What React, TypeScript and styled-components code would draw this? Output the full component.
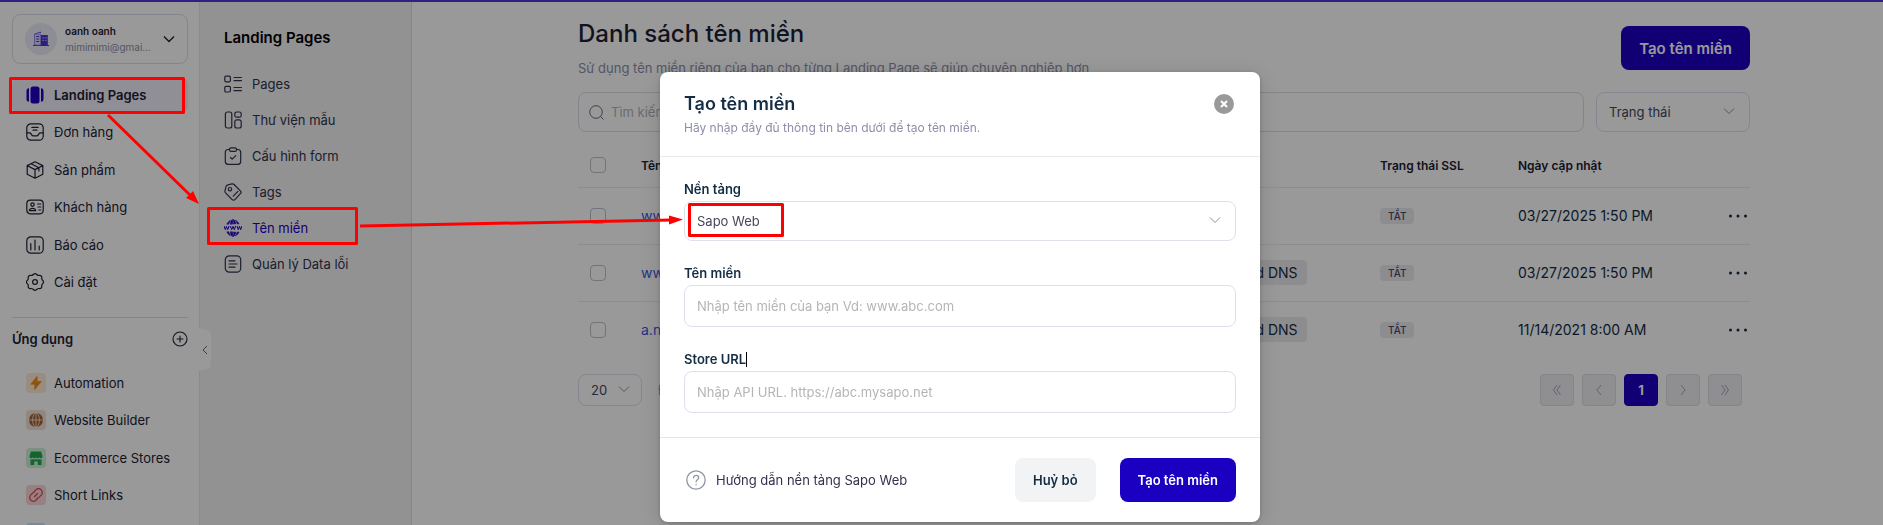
import React from "react";
import styled, { createGlobalStyle } from "styled-components";

const GlobalStyle = createGlobalStyle`
  *, *::before, *::after { box-sizing: border-box; }
  body { margin: 0; background: #fff; overflow: hidden; }
  body, button, input, select { font-family: Inter, "Noto Sans", sans-serif; }
  button { cursor: pointer; }
  a { text-decoration: none; }
  svg { display: block; flex: none; }
`;

/* ---------- shell ---------- */

const Shell = styled.div`
  height: 100vh;
  overflow: hidden;
  display: flex;
  border-top: 2px solid #5533d8;
  color: #212134;
  font-size: 13px;
`;

const Sidebar = styled.aside`
  flex: none;
  width: 200px;
  padding: 12px 11px 0 12px;
  border-right: 1px solid #e6e6ee;
`;

const SubSidebar = styled.aside`
  position: relative;
  flex: none;
  width: 212px;
  padding: 24px 12px 0 24px;
  background: #f3f3f6;
  border-right: 1px solid #dcdce4;
`;

const Main = styled.main`
  flex: 1;
  min-width: 0;
  padding: 14px 133px 0 166px;
`;

/* ---------- sidebar ---------- */

const AccountButton = styled.button`
  display: flex;
  align-items: center;
  gap: 8px;
  width: 100%;
  height: 50px;
  padding: 0 12px;
  border: 1px solid #dcdce8;
  border-radius: 8px;
  background: #fff;
  color: #212134;
  text-align: left;
`;

const Avatar = styled.span`
  display: grid;
  place-items: center;
  width: 32px;
  height: 32px;
  border-radius: 50%;
  background: #ececfa;
`;

const AccountText = styled.span`
  flex: 1;
  min-width: 0;
  display: flex;
  flex-direction: column;
  font-size: 10px;
  line-height: 16px;
`;

const AccountName = styled.span`
  font-weight: 600;
`;

const AccountMail = styled.span`
  color: #8e8ea9;
  white-space: nowrap;
`;

const NavList = styled.nav`
  display: grid;
  grid-auto-rows: 1fr;
  height: 225px;
  margin-top: 12px;
`;

const NavLink = styled.a<{ $active?: boolean }>`
  display: flex;
  align-items: center;
  gap: 10px;
  margin: 2px 0;
  padding-left: 14px;
  border-radius: 6px;
  color: #212134;
  font-weight: ${(p) => (p.$active ? 600 : 400)};
  background: ${(p) => (p.$active ? "#eeeef8" : "transparent")};
`;

const AppTile = styled.span<{ $bg: string }>`
  display: grid;
  place-items: center;
  flex: none;
  width: 20px;
  height: 20px;
  border-radius: 4px;
  background: ${(p) => p.$bg};
`;

const AppLink = styled(NavLink)`
  gap: 8px;
`;

const AppsHead = styled.div`
  display: flex;
  align-items: center;
  justify-content: space-between;
  height: 43px;
  margin-top: 16px;
  border-top: 1px solid #dcdce4;
  font-weight: 600;
`;

const IconButton = styled.button`
  display: grid;
  place-items: center;
  padding: 0;
  border: 0;
  background: none;
  color: inherit;
`;

const AppsList = styled(NavList)`
  margin-top: 4px;
`;

/* ---------- second sidebar ---------- */

const SubTitle = styled.h2`
  margin: 0 0 16px;
  font-size: 15px;
  line-height: 24px;
  font-weight: 600;
  color: #000;
`;

const SubLink = styled.a<{ $active?: boolean }>`
  display: flex;
  align-items: center;
  gap: 10px;
  height: 36px;
  color: ${(p) => (p.$active ? "#1f00c2" : "#32324d")};
`;

const Collapse = styled.button`
  position: absolute;
  left: -1px;
  top: 326px;
  width: 12px;
  height: 43px;
  padding: 0;
  border: 0;
  background: none;
`;

/* ---------- main ---------- */

const PageHead = styled.header`
  display: flex;
  justify-content: space-between;
  align-items: flex-start;
  height: 76px;
`;

const PageTitle = styled.h1`
  margin: 0 0 6px;
  font-size: 24px;
  line-height: 36px;
  font-weight: 500;
`;

const PageText = styled.p`
  margin: 0;
  line-height: 20px;
  color: #8e8ea9;
`;

const Button = styled.button<{ $kind: "primary" | "plain"; $large?: boolean }>`
  height: 44px;
  padding: 0 18px;
  border: 0;
  border-radius: 8px;
  font-size: ${(p) => (p.$large ? 15 : 13)}px;
  font-weight: 600;
  white-space: nowrap;
  color: ${(p) => (p.$kind === "primary" ? "#fff" : "#142c44")};
  background: ${(p) => (p.$kind === "primary" ? "#1b00c2" : "#f1f3f5")};
`;

const PageAction = styled.div`
  padding-top: 10px;
`;

const Filters = styled.div`
  display: flex;
  gap: 12px;
`;

const SearchBox = styled.label`
  flex: 1;
  display: flex;
  align-items: center;
  gap: 7px;
  height: 40px;
  padding: 0 10px;
  border: 1px solid #dcdce8;
  border-radius: 8px;
`;

const SearchInput = styled.input`
  flex: 1;
  padding: 0;
  border: 0;
  outline: 0;
  background: none;
  font-size: 13px;
  &::placeholder { color: #b3b3b8; }
`;

const SelectWrap = styled.div<{ $width?: number; $height: number; $right: number }>`
  display: grid;
  align-items: center;
  width: ${(p) => (p.$width ? `${p.$width}px` : "100%")};
  height: ${(p) => p.$height}px;
  & > * { grid-area: 1 / 1; }
  & > svg {
    justify-self: end;
    margin: 0 ${(p) => p.$right}px 2px 0;
    pointer-events: none;
  }
`;

const Select = styled.select`
  appearance: none;
  width: 100%;
  height: 100%;
  padding: 0 12px;
  border: 1px solid #dfdfee;
  border-radius: 8px;
  background: none;
  font-size: 13px;
  color: #46465a;
`;

const Table = styled.table`
  width: 100%;
  margin-top: 12px;
  border-collapse: collapse;
  table-layout: fixed;
`;

const HeadCell = styled.th<{ $width?: number }>`
  width: ${(p) => (p.$width ? `${p.$width}px` : "auto")};
  height: 43px;
  padding: 0;
  border-bottom: 1px solid #ececf2;
  text-align: left;
  font-size: 12px;
  font-weight: 600;
`;

const Cell = styled.td`
  height: 57px;
  padding: 0;
  font-size: 14px;
  color: #142c44;
  border-bottom: 1px solid #ececf2;
  tr:last-child > & { border-bottom: 0; }
`;

const Checkbox = styled.input`
  appearance: none;
  display: block;
  width: 16px;
  height: 16px;
  margin: 0 0 0 12px;
  border: 1px solid #c0c0cf;
  border-radius: 4px;
`;

const DomainLink = styled.a`
  color: #3d55e0;
`;

const DnsTag = styled.span`
  display: inline-block;
  padding: 0 9px;
  border-radius: 4px;
  line-height: 25px;
  background: #ececef;
`;

const StateTag = styled.span`
  display: block;
  width: fit-content;
  padding: 0 8px;
  border-radius: 4px;
  font-size: 10px;
  line-height: 16px;
  font-weight: 500;
  color: #4a4a6a;
  background: #ececf1;
`;

const MoreButton = styled(IconButton)`
  margin-left: auto;
`;

const TableFoot = styled.footer`
  display: flex;
  align-items: center;
  gap: 16px;
  margin-top: 16px;
  padding-right: 8px;
`;

const Pager = styled.div`
  display: flex;
  gap: 8px;
  margin-left: auto;
`;

const PageButton = styled.button<{ $current?: boolean }>`
  display: grid;
  place-items: center;
  width: 34px;
  height: 32px;
  padding: 0;
  border: 1px solid ${(p) => (p.$current ? "#1b00c2" : "#dcdce4")};
  border-radius: 4px;
  font-size: 13px;
  font-weight: 700;
  color: ${(p) => (p.$current ? "#fff" : "#a5a5ba")};
  background: ${(p) => (p.$current ? "#1b00c2" : "#eeeef3")};
`;

/* ---------- dialog ---------- */

const Overlay = styled.div`
  position: fixed;
  inset: 0;
  display: flex;
  justify-content: center;
  align-items: flex-start;
  padding: 72px 0 0 37px;
  background: rgba(0, 0, 0, 0.4);
`;

const Dialog = styled.form`
  width: 600px;
  border-radius: 8px;
  background: #fff;
  color: #142c44;
  font-size: 13px;
  box-shadow: 0 4px 24px rgba(0, 0, 0, 0.15), 0 1px 4px rgba(0, 0, 0, 0.2);
`;

const DialogHead = styled.header`
  display: flex;
  justify-content: space-between;
  align-items: flex-start;
  height: 85px;
  padding: 20px 26px 0 24px;
  border-bottom: 1px solid #e9e9ec;
`;

const DialogTitle = styled.h2`
  margin: 0;
  font-size: 18px;
  line-height: 24px;
  font-weight: 600;
`;

const DialogText = styled.p`
  margin: 2px 0 0;
  font-size: 12px;
  line-height: 20px;
  color: #8e8ea9;
`;

const CloseButton = styled.button`
  display: grid;
  place-items: center;
  width: 20px;
  height: 20px;
  margin-top: 2px;
  padding: 0;
  border: 0;
  border-radius: 50%;
  color: #fff;
  background: #999;
`;

const DialogBody = styled.div`
  display: flex;
  flex-direction: column;
  gap: 22px;
  padding: 22px 24px 24px;
`;

const Field = styled.div`
  display: flex;
  flex-direction: column;
`;

const Label = styled.label`
  display: flex;
  align-items: center;
  height: 22px;
  padding-bottom: 2px;
  font-weight: 600;
`;

const Caret = styled.span`
  width: 1px;
  height: 15px;
  background: #000;
`;

const TextInput = styled.input`
  height: 42px;
  padding: 0 12px;
  border: 1px solid #dfdfee;
  border-radius: 8px;
  outline: 0;
  font-size: 13px;
  &::placeholder { color: #b5b5b8; }
`;

const DialogFoot = styled.footer`
  display: flex;
  align-items: center;
  gap: 24px;
  height: 85px;
  padding: 0 24px 0 26px;
  border-top: 1px solid #e4e4ea;
`;

const HelpLink = styled.a`
  display: flex;
  align-items: center;
  gap: 10px;
  margin-right: auto;
  color: #32324d;
`;

/* ---------- annotation marks ---------- */

const Marks = styled.svg`
  position: fixed;
  left: 0;
  top: 0;
  pointer-events: none;
`;

/* ---------- icons ---------- */

const Icon = ({ size = 18, box = 18, w = 1.2, children }: { size?: number; box?: number; w?: number; children: React.ReactNode }) => (
  <svg width={size} height={size} viewBox={`0 0 ${box} ${box}`} fill="none" stroke="currentColor" strokeWidth={w} strokeLinecap="round" strokeLinejoin="round" aria-hidden="true">
    {children}
  </svg>
);

const Chevron = ({ color = "#8e8e98", w = 1 }: { color?: string; w?: number }) => (
  <svg width="12" height="12" viewBox="0 0 12 12" fill="none" stroke={color} strokeWidth={w} aria-hidden="true">
    <path d="M1 3.5 6 8.5l5-5" />
  </svg>
);

const PanelsIcon = () => (
  <Icon>
    <rect x="4.5" y=".5" width="9" height="17" rx="2.5" fill="#1f00c2" stroke="none" />
    <path d="M3 2.2v13.6C1.2 15.6.5 14.6.5 13V5C.5 3.4 1.2 2.4 3 2.2zM15 2.2v13.6c1.8-.2 2.5-1.2 2.5-2.8V5c0-1.600-.7-2.600-2.500-2.800z" fill="#1f00c2" stroke="none" />
  </Icon>
);
const InboxIcon = () => (
  <Icon>
    <rect x=".8" y=".8" width="16.4" height="16.4" rx="4" />
    <path d="M.8 9.800h2.700c.8 0 1.200.4 1.600 1.100l.6 1c.4.7.8 1 1.600 1h3.400c.8 0 1.200-.3 1.600-1l.6-1c.4-.7.8-1.100 1.600-1.100h2.700M5.800 4.300h6.400M7 7.200h4" />
  </Icon>
);
const BoxIcon = () => (
  <Icon>
    <path d="M9 .8 16.800 4.600v8.600L9 17.200l-7.800-4V4.600zM1.400 4.800 9 8.600l7.600-3.800M9 8.600v8.400M5.200 2.800l7.700 3.900v3.200" />
  </Icon>
);
const IdIcon = () => (
  <Icon>
    <rect x=".8" y="2.200" width="16.400" height="13.600" rx="3.500" />
    <circle cx="6.500" cy="6.600" r="1.700" />
    <path d="M3.300 12.600c-.2-3 6.600-3 6.400 0zM11.500 6h3.300M12 9h2.800M12.800 12h2" />
  </Icon>
);
const ReportIcon = () => (
  <Icon>
    <rect x=".8" y=".8" width="16.400" height="16.400" rx="4" />
    <path d="M4.800 7.500V14M9 4v10M13.200 10v4" />
  </Icon>
);
const GearIcon = () => (
  <Icon>
    <circle cx="9" cy="9" r="2.400" />
    <path d="M7.300 1.500c1-.9 2.400-.9 3.400 0 .9 1 1.700 1.200 3 .9 1.300-.1 2.400 1.100 2.100 2.400-.3 1.200 0 1.900.9 2.500 1 1 1 2.400 0 3.400-.9.600-1.200 1.300-.9 2.500.3 1.300-.8 2.500-2.100 2.400-1.300-.3-2.100-.1-3 .9-1 .9-2.400.9-3.400 0-.9-1-1.700-1.200-3-.9-1.300.1-2.400-1.100-2.100-2.400.3-1.200 0-1.900-.9-2.500-1-1-1-2.400 0-3.400.9-.6 1.200-1.300.9-2.500-.3-1.300.8-2.500 2.100-2.400 1.300.3 2.100.1 3-.9z" />
  </Icon>
);
const PagesIcon = () => (
  <Icon>
    <rect x=".8" y="1.200" width="5.600" height="5.600" rx="1.200" />
    <rect x=".8" y="11.400" width="5.600" height="5.600" rx="1.200" />
    <path d="M10 2.500h7.400M10 5.700h7.400M10 12.500h7.400M10 15.700h7.400" />
  </Icon>
);
const LibraryIcon = () => (
  <Icon>
    <rect x="1.400" y="1" width="6.400" height="16" rx="2" />
    <rect x="10.800" y="1" width="6.400" height="5.200" rx="1.800" />
    <rect x="10.800" y="8.800" width="6.400" height="8.200" rx="2" />
  </Icon>
);
const FormIcon = () => (
  <Icon>
    <path d="M5.500 2.500H4A2.800 2.800 0 0 0 1.300 5.300v9.200A2.800 2.800 0 0 0 4 17.300h10a2.800 2.800 0 0 0 2.700-2.800V5.300A2.800 2.800 0 0 0 14 2.500h-1.500" />
    <rect x="5.500" y=".8" width="7" height="3.600" rx="1.500" />
    <path d="m6.500 10.500 1.700 1.700 3.600-3.600" />
  </Icon>
);
const TagIcon = () => (
  <Icon>
    <path d="M1 7.600 2 3.600C2.300 2.600 2.900 2 3.900 1.800l4-.9c.9-.2 1.600 0 2.200.6l6.300 6.300c.9.900.9 2 0 2.900l-5.300 5.700c-1 1-2.200 1-3.200 0L1.600 9.900C1 9.300.8 8.500 1 7.600z" />
    <circle cx="6" cy="6.200" r="1.700" />
    <path d="m9.200 13.200 4.800-4.800" />
  </Icon>
);
const DocIcon = () => (
  <Icon>
    <rect x="1.300" y=".8" width="15.400" height="16.400" rx="4" />
    <path d="M5 5.800h6M5 9h8M5 12.200h6" />
  </Icon>
);
const DomainIcon = () => (
  <Icon w={1}>
    <path d="M3 4.800A8.400 8.400 0 0 1 6.300 1.400 9 9 0 0 0 4.800 4.800zM6.300 4.800C6.800 2.600 7.500 1 8.400.6v4.200zM9.600.6c.9.400 1.600 2 2.100 4.200H9.600zM11.700 1.400A8.400 8.400 0 0 1 15 4.800h-1.800a9 9 0 0 0-1.500-3.400zM3 13.200a8.400 8.400 0 0 0 3.300 3.400 9 9 0 0 1-1.500-3.400zM6.300 13.200c.5 2.200 1.200 3.800 2.100 4.200v-4.200zM9.600 17.400c.9-.4 1.600-2 2.100-4.200H9.600zM11.700 16.600a8.400 8.400 0 0 0 3.300-3.400h-1.800a9 9 0 0 1-1.500 3.400z" fill="currentColor" strokeWidth=".7" />
    <path d="m.2 7.400 1.100 3.200 1.200-3.200 1.200 3.200L4.900 7.400M6.500 7.400l1.200 3.200L9 7.400l1.300 3.200 1.200-3.200M13.100 7.400l1.200 3.200 1.200-3.200 1.200 3.200 1.100-3.200" />
  </Icon>
);

const BuildingIcon = () => (
  <svg width="16" height="16" viewBox="0 0 16 16" fill="none" aria-hidden="true">
    <path d="M0 14.500h16" stroke="#4a35d0" strokeWidth="1" />
    <path d="M1.500 14V3.200L7.500 1v1" stroke="#4a35d0" strokeWidth=".8" />
    <path d="M1.500 3.200h6V14h-6z" fill="#dcd8f7" stroke="#8c7fe0" strokeWidth=".8" />
    <path d="M8 4h6.800v10.300H8z" fill="#4a35d0" />
    <path d="M3.200 5.500h3M3.200 8h3M3.200 10.500h3" stroke="#4a35d0" strokeWidth="1.200" />
    <path d="M9.500 6.800h1.400M12.200 6.800h1.400M9.500 9.500h1.400M12.200 9.500h1.400" stroke="#b9b0f0" strokeWidth="1.200" />
  </svg>
);
const PlusIcon = () => (
  <Icon size={16} box={16} w={1.1}>
    <circle cx="8" cy="8" r="7" />
    <path d="M8 5v6M5 8h6" />
  </Icon>
);
const SearchIcon = () => (
  <svg width="15" height="15" viewBox="0 0 15 15" fill="none" stroke="#666687" aria-hidden="true">
    <circle cx="7" cy="7" r="6.300" />
    <path d="m11.500 11.500 3 3" />
  </svg>
);
const BoltIcon = () => (
  <svg width="12" height="14" viewBox="0 0 12 14" aria-hidden="true">
    <path d="M7 .5.800 8.200H5L4.600 13.500 11.200 5.600H7.100z" fill="#f08c16" stroke="#f08c16" strokeWidth=".8" strokeLinejoin="round" />
  </svg>
);
const GlobeIcon = () => (
  <svg width="14" height="14" viewBox="0 0 14 14" fill="none" aria-hidden="true">
    <circle cx="7" cy="7" r="7" fill="#a5602e" />
    <path d="M0 7h14M7 0v14" stroke="#f1e2d8" strokeWidth=".9" />
    <ellipse cx="7" cy="7" rx="3.400" ry="7" stroke="#f1e2d8" strokeWidth=".9" />
  </svg>
);
const StoreIcon = () => (
  <svg width="14" height="14" viewBox="0 0 14 14" aria-hidden="true">
    <path d="M2 .5h10L13.500 5c0 2.500-2.600 2.900-3.300 1.300-.6 1.500-2.600 1.500-3.200 0-.6 1.500-2.600 1.500-3.200 0C3.100 7.900.5 7.500.5 5z" fill="#1faa4b" />
    <path d="M1.500 8.300c1 .3 1.700.1 2.300-.4 1 .8 2.200.8 3.200 0 1 .8 2.200.8 3.200 0 .6.500 1.300.7 2.300.4V14H8.800v-3.500H5.200V14H1.500z" fill="#1faa4b" />
  </svg>
);
const LinkIcon = () => (
  <svg width="14" height="14" viewBox="0 0 14 14" fill="none" stroke="#e04050" strokeWidth="1.200" strokeLinecap="round" aria-hidden="true">
    <path d="M5.400 3.300 6.900 1.800a3.700 3.700 0 0 1 5.300 5.300L9.900 9.400a3.200 3.200 0 0 1-2 .8M8.600 10.700 7.100 12.200a3.700 3.700 0 0 1-5.300-5.300l2.300-2.300a3.200 3.200 0 0 1 1.400-.8M5.500 8.500l3-3" />
  </svg>
);
const DotsIcon = () => (
  <svg width="22" height="16" viewBox="0 0 22 16" fill="#142c44" aria-hidden="true">
    <circle cx="2.500" cy="8" r="1.500" />
    <circle cx="10" cy="8" r="1.500" />
    <circle cx="17.500" cy="8" r="1.500" />
  </svg>
);
const CollapseShape = () => (
  <svg width="12" height="43" viewBox="0 0 12 43" fill="none" aria-hidden="true">
    <path d="M0 0l8 2q4 1 4 5v29q0 4-4 5l-8 2z" fill="#fff" />
    <path d="M8 18l-4 4 4 4" stroke="#666687" />
  </svg>
);
const Arrows = ({ double, right }: { double?: boolean; right?: boolean }) => (
  <svg width="12" height="12" viewBox="0 0 12 12" fill="none" stroke="currentColor" aria-hidden="true">
    <g transform={right ? "rotate(180 6 6)" : undefined}>
      <path d={double ? "M6 1 2.500 6 6 11M9.500 1 6 6l3.500 5" : "M8 1 4 6l4 5"} />
    </g>
  </svg>
);

/* ---------- data ---------- */

const mainNav = [
  { label: "Landing Pages", icon: <PanelsIcon />, active: true },
  { label: "Đơn hàng", icon: <InboxIcon /> },
  { label: "Sản phẩm", icon: <BoxIcon /> },
  { label: "Khách hàng", icon: <IdIcon /> },
  { label: "Báo cáo", icon: <ReportIcon /> },
  { label: "Cài đặt", icon: <GearIcon /> },
];

const apps = [
  { label: "Automation", bg: "#fdebd3", icon: <BoltIcon /> },
  { label: "Website Builder", bg: "#f1e2d8", icon: <GlobeIcon /> },
  { label: "Ecommerce Stores", bg: "#cdf0d8", icon: <StoreIcon /> },
  { label: "Short Links", bg: "#fbd5d9", icon: <LinkIcon /> },
  { label: "", bg: "#cfe3fb", icon: null },
  { label: "", bg: "transparent", icon: null },
];

const subNav = [
  { label: "Pages", icon: <PagesIcon /> },
  { label: "Thư viện mẫu", icon: <LibraryIcon /> },
  { label: "Cấu hình form", icon: <FormIcon /> },
  { label: "Tags", icon: <TagIcon /> },
  { label: "Tên miền", icon: <DomainIcon />, active: true },
  { label: "Quản lý Data lỗi", icon: <DocIcon /> },
];

const rows = [
  { domain: "www.abc.com", dns: false, date: "03/27/2025 1:50 PM" },
  { domain: "www.abc.com", dns: true, date: "03/27/2025 1:50 PM" },
  { domain: "a.net", dns: true, date: "11/14/2021 8:00 AM" },
];

export default function App() {
  return (
    <>
      <GlobalStyle />
      <Shell>
        <Sidebar>
          <AccountButton type="button">
            <Avatar><BuildingIcon /></Avatar>
            <AccountText>
              <AccountName>oanh oanh</AccountName>
              <AccountMail>mimimimi@gmai...</AccountMail>
            </AccountText>
            <Chevron color="#212134" w={1.4} />
          </AccountButton>
          <NavList>
            {mainNav.map((n) => (
              <NavLink key={n.label} href="#" $active={n.active}>{n.icon}{n.label}</NavLink>
            ))}
          </NavList>
          <AppsHead>
            Ứng dụng
            <IconButton type="button" aria-label="Thêm ứng dụng"><PlusIcon /></IconButton>
          </AppsHead>
          <AppsList>
            {apps.map((a, i) => (
              <AppLink key={i} href="#"><AppTile $bg={a.bg}>{a.icon}</AppTile>{a.label}</AppLink>
            ))}
          </AppsList>
        </Sidebar>

        <SubSidebar>
          <SubTitle>Landing Pages</SubTitle>
          <nav>
            {subNav.map((n) => (
              <SubLink key={n.label} href="#" $active={n.active}>{n.icon}{n.label}</SubLink>
            ))}
          </nav>
          <Collapse type="button" aria-label="Thu gọn"><CollapseShape /></Collapse>
        </SubSidebar>

        <Main>
          <PageHead>
            <div>
              <PageTitle>Danh sách tên miền</PageTitle>
              <PageText>Sử dụng tên miền riêng của bạn cho từng Landing Page sẽ giúp chuyên nghiệp hơn</PageText>
            </div>
            <PageAction><Button type="button" $kind="primary" $large>Tạo tên miền</Button></PageAction>
          </PageHead>
          <Filters>
            <SearchBox>
              <SearchIcon />
              <SearchInput aria-label="Tìm kiếm" placeholder="Tìm kiếm" />
            </SearchBox>
            <SelectWrap $width={154} $height={40} $right={15}>
              <Select aria-label="Trạng thái"><option>Trạng thái</option></Select>
              <Chevron />
            </SelectWrap>
          </Filters>
          <Table>
            <thead>
              <tr>
                <HeadCell $width={63}><Checkbox type="checkbox" aria-label="Chọn tất cả" /></HeadCell>
                <HeadCell>Tên miền</HeadCell>
                <HeadCell $width={172} />
                <HeadCell $width={138}>Trạng thái SSL</HeadCell>
                <HeadCell $width={180}>Ngày cập nhật</HeadCell>
                <HeadCell $width={52} />
              </tr>
            </thead>
            <tbody>
              {rows.map((r, i) => (
                <tr key={i}>
                  <Cell><Checkbox type="checkbox" aria-label={r.domain} /></Cell>
                  <Cell><DomainLink href="#">{r.domain}</DomainLink></Cell>
                  <Cell>{r.dns && <DnsTag>Record DNS</DnsTag>}</Cell>
                  <Cell><StateTag>TẮT</StateTag></Cell>
                  <Cell>{r.date}</Cell>
                  <Cell><MoreButton type="button" aria-label="Thao tác"><DotsIcon /></MoreButton></Cell>
                </tr>
              ))}
            </tbody>
          </Table>
          <TableFoot>
            <SelectWrap $width={64} $height={32} $right={12}>
              <Select aria-label="Số dòng"><option>20</option></Select>
              <Chevron />
            </SelectWrap>
            <PageText>Đang hiển thị</PageText>
            <Pager>
              <PageButton type="button" aria-label="Trang đầu"><Arrows double /></PageButton>
              <PageButton type="button" aria-label="Trang trước"><Arrows /></PageButton>
              <PageButton type="button" $current>1</PageButton>
              <PageButton type="button" aria-label="Trang sau"><Arrows right /></PageButton>
              <PageButton type="button" aria-label="Trang cuối"><Arrows double right /></PageButton>
            </Pager>
          </TableFoot>
        </Main>
      </Shell>

      <Overlay>
        <Dialog role="dialog" aria-labelledby="dialog-title" onSubmit={(e) => e.preventDefault()}>
          <DialogHead>
            <div>
              <DialogTitle id="dialog-title">Tạo tên miền</DialogTitle>
              <DialogText>Hãy nhập đầy đủ thông tin bên dưới để tạo tên miền.</DialogText>
            </div>
            <CloseButton type="button" aria-label="Đóng">
              <svg width="8" height="8" viewBox="0 0 8 8" stroke="currentColor" strokeWidth="2" aria-hidden="true">
                <path d="m1 1 6 6M7 1 1 7" />
              </svg>
            </CloseButton>
          </DialogHead>
          <DialogBody>
            <Field>
              <Label htmlFor="platform">Nền tảng</Label>
              <SelectWrap $height={40} $right={15}>
                <Select id="platform"><option>Sapo Web</option></Select>
                <Chevron />
              </SelectWrap>
            </Field>
            <Field>
              <Label htmlFor="domain">Tên miền</Label>
              <TextInput id="domain" placeholder="Nhập tên miền của bạn Vd: www.abc.com" />
            </Field>
            <Field>
              <Label htmlFor="store">Store URL<Caret /></Label>
              <TextInput id="store" placeholder="Nhập API URL. https://abc.mysapo.net" />
            </Field>
          </DialogBody>
          <DialogFoot>
            <HelpLink href="#">
              <Icon size={20} box={20} w={1.3}>
                <g stroke="#8e95a5">
                  <circle cx="10" cy="10" r="9.200" />
                  <path d="M7.500 7.800c0-3.200 5.200-3 5.200 0 0 2-2.600 2-2.600 4M10.100 14.500v.2" />
                </g>
              </Icon>
              Hướng dẫn nền tảng Sapo Web
            </HelpLink>
            <Button type="button" $kind="plain">Huỷ bỏ</Button>
            <Button type="submit" $kind="primary">Tạo tên miền</Button>
          </DialogFoot>
        </Dialog>
      </Overlay>

      <Marks width="800" height="260" viewBox="0 0 800 260" fill="none" stroke="#f00" strokeWidth="3" strokeLinejoin="round" aria-hidden="true">
        <rect x="10.500" y="78.500" width="173" height="34" />
        <rect x="208.500" y="208.500" width="148" height="35" />
        <rect x="689.500" y="204.500" width="93" height="31" />
        <path d="M108 115l84 82M360 226l311-6" />
        <path d="M199 204l-13-6 7-7zM683 219.500l-14 5v-9z" fill="#f00" stroke="none" />
      </Marks>
    </>
  );
}
